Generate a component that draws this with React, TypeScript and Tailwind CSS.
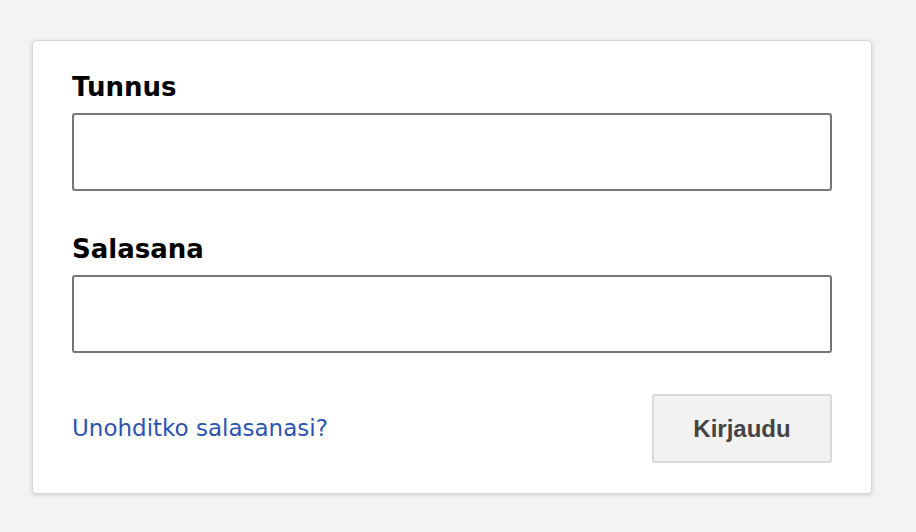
import React from "react";

const Field: React.FC<{ label: string; type?: string; className?: string }> = ({ label, type = "text", className = "" }) => (
    <label className={`flex flex-col ${className}`}>
        <span className="text-[26px] leading-[30px] font-bold text-black">{label}</span>
        <input
            type={type}
            className="mt-[11px] h-[78px] w-full rounded-[3px] border-2 border-[#767676] bg-white px-3 outline-none"
        />
    </label>
);

const App: React.FC = () => {
    return (
        <div className="min-h-[532px] w-[916px] bg-[#f3f3f3] pt-[40px] pl-[32px] font-['DejaVu_Sans',Verdana,sans-serif]">
            <div className="w-[840px] h-[454px] rounded-[4px] border border-[#d6d6d6] bg-white px-[39px] pt-[31px] shadow-[0_1px_4px_rgba(0,0,0,0.15)]">
                <Field label="Tunnus" />
                <Field label="Salasana" type="password" className="mt-[43px]" />

                <div className="mt-[41px] flex items-center justify-between">
                    <a href="#" className="text-[23px] text-[#2b53b5]">
                        Unohditko salasanasi?
                    </a>
                    <button className="h-[69px] w-[180px] rounded-[3px] border-2 border-[#d9d9d9] bg-[#f2f2f2] font-['Liberation_Sans',Arial,sans-serif] text-[24px] font-bold text-[#444]">
                        Kirjaudu
                    </button>
                </div>
            </div>
        </div>
    );
};

export default App;
